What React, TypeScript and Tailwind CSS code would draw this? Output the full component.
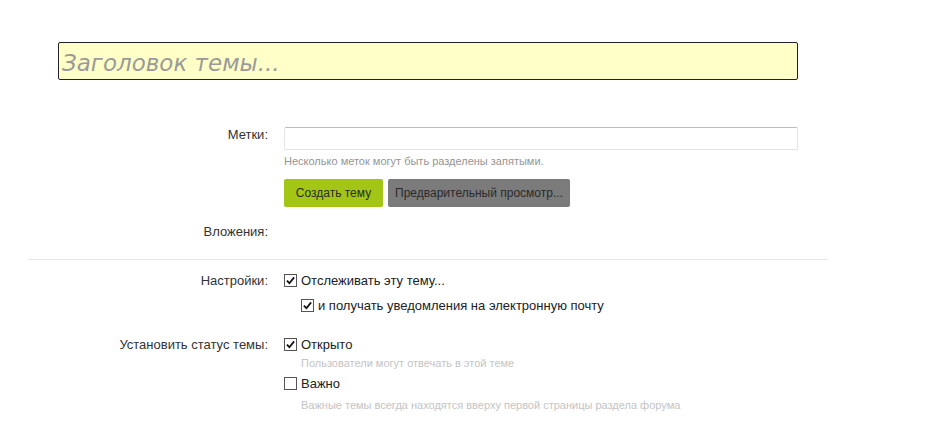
import React from 'react';

const Check = ({ checked }: { checked: boolean }) => (
  <span className="inline-flex h-[13px] w-[13px] shrink-0 items-center justify-center border border-[#555] bg-white">
    {checked && (
      <svg viewBox="0 0 10 10" className="h-[9px] w-[9px]">
        <path d="M1 5.2 L3.8 8 L9 1.6" fill="none" stroke="#111" strokeWidth="2" />
      </svg>
    )}
  </span>
);

const Row = ({ label, children, className = '' }: { label: string; children?: React.ReactNode; className?: string }) => (
  <div className={`flex ${className}`}>
    <div className="w-[240px] shrink-0 text-right text-[13px] leading-[16px] text-[#333]">{label}</div>
    <div className="ml-4 w-[514px]">{children}</div>
  </div>
);

export default function App() {
  return (
    <div className="min-h-[439px] bg-white font-['Liberation_Sans',Arial,sans-serif]">
      <div className="ml-[28px] w-[800px] pt-[42px]">
        <div className="ml-[30px] h-[38px] w-[740px] rounded-[2px] border border-[#222] bg-[#ffffc8] pl-[3px] pt-[3px]">
          <span className="font-['DejaVu_Sans',sans-serif] text-[23px] italic text-[#9a9a9a]">Заголовок темы...</span>
        </div>

        <Row label="Метки:" className="mt-[47px] items-start">
          <div className="h-[23px] w-[514px] rounded-[2px] border border-[#e4e4e4] border-t-[#bdbdbd]" />
          <p className="mt-[3px] text-[11px] text-[#959595]">Несколько меток могут быть разделены запятыми.</p>
          <div className="mt-[9px] flex gap-[5px]">
            <button className="h-[28px] w-[99px] rounded-[2px] bg-[#a2c516] text-[12px] text-[#2a2a2a]">Создать тему</button>
            <button className="h-[28px] w-[182px] rounded-[2px] bg-[#7b7b7b] text-[12px] text-[#2a2a2a]">Предварительный просмотр...</button>
          </div>
        </Row>
        <div className="flex">
          <div className="mt-[17px] w-[240px] text-right text-[13px] leading-[16px] text-[#333]">Вложения:</div>
        </div>
        <div className="mt-[19px] border-t border-[#e2e2e8]" />

        <Row label="Настройки:" className="mt-[13px]">
          <label className="flex items-center gap-[4px] text-[13px] leading-[16px] text-[#222]">
            <Check checked />
            <span>Отслеживать эту тему...</span>
          </label>
          <label className="ml-[17px] mt-[9px] flex items-center gap-[4px] text-[13px] leading-[16px] text-[#222]">
            <Check checked />
            <span>и получать уведомления на электронную почту</span>
          </label>
        </Row>

        <Row label="Установить статус темы:" className="mt-[23px]">
          <label className="flex items-center gap-[4px] text-[13px] leading-[16px] text-[#222]">
            <Check checked />
            <span>Открыто</span>
          </label>
          <p className="ml-[17px] mt-[3px] text-[11px] leading-[14px] text-[#c4c4c4]">Пользователи могут отвечать в этой теме</p>
          <label className="mt-[6px] flex items-center gap-[4px] text-[13px] leading-[16px] text-[#222]">
            <Check checked={false} />
            <span>Важно</span>
          </label>
          <p className="ml-[17px] mt-[6px] text-[11px] leading-[14px] text-[#c4c4c4]">Важные темы всегда находятся вверху первой страницы раздела форума</p>
        </Row>
      </div>
    </div>
  );
}
